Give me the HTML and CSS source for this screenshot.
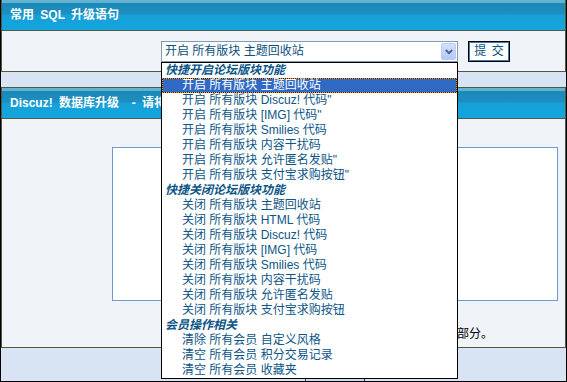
FILE: index.html
```html
<!DOCTYPE html>
<html lang="zh-CN">
<head>
<meta charset="UTF-8" />
<title>Discuz! 数据库升级</title>
<link rel="stylesheet" href="styles.css">
</head>
<body>
  <div class="frame">
    <div class="box box-first">
      <div class="box-head">常用 SQL 升级语句</div>
      <div class="box-body sql-row">
        <div class="combo">
          <div class="combo-field">
            <span class="combo-text">开启 所有版块 主题回收站</span>
            <span class="combo-arrow">
              <svg width="8" height="6" viewBox="0 0 8 6"><path d="M0.8 1 L4 4.2 L7.2 1" fill="none" stroke="#4d6185" stroke-width="2"/></svg>
            </span>
          </div>
          <ul class="combo-list">
            <li class="grp">快捷开启论坛版块功能</li>
            <li class="on">开启 所有版块 主题回收站</li>
            <li>开启 所有版块 Discuz! 代码"</li>
            <li>开启 所有版块 [IMG] 代码"</li>
            <li>开启 所有版块 Smilies 代码</li>
            <li>开启 所有版块 内容干扰码</li>
            <li>开启 所有版块 允许匿名发贴"</li>
            <li>开启 所有版块 支付宝求购按钮"</li>
            <li class="grp">快捷关闭论坛版块功能</li>
            <li>关闭 所有版块 主题回收站</li>
            <li>关闭 所有版块 HTML 代码</li>
            <li>关闭 所有版块 Discuz! 代码</li>
            <li>关闭 所有版块 [IMG] 代码</li>
            <li>关闭 所有版块 Smilies 代码</li>
            <li>关闭 所有版块 内容干扰码</li>
            <li>关闭 所有版块 允许匿名发贴</li>
            <li>关闭 所有版块 支付宝求购按钮</li>
            <li class="grp">会员操作相关</li>
            <li>清除 所有会员 自定义风格</li>
            <li>清空 所有会员 积分交易记录</li>
            <li>清空 所有会员 收藏夹</li>
          </ul>
        </div>
        <button class="btn">提&nbsp;交</button>
      </div>
    </div>

    <div class="box">
      <div class="box-head">Discuz! 数据库升级 &nbsp;- 请将升</div>
      <div class="box-body upgrade">
        <div class="sql-area"></div>
        <p class="note">请只执行需要的部分。</p>
      </div>
    </div>

    <div class="foot">
      <button class="btn btn-foot">提&nbsp;交</button>
    </div>
  </div>
</body>
</html>
```

FILE: styles.css
```css
body {
  margin: 0;
  background: #d8e4f4;
  font-family: "Liberation Sans", "Noto Sans CJK SC", sans-serif;
  font-size: 12px;
}
.frame {
  height: 382px;
  box-sizing: border-box;
  border: 1px solid #000;
  border-top: 0;
  background: #d8e4f4;
  overflow: hidden;
}
.box {
  border: 1px solid #4e5a44;
  background: #f0f4f8;
}
.box-first {
  border-top: 0;
}
.box + .box {
  margin-top: 15px;
}
.box-head {
  height: 30px;
  line-height: 31px;
  padding-left: 8px;
  color: #fff;
  font-weight: bold;
  white-space: nowrap;
  word-spacing: 3px;
  border-bottom: 1px solid #4e5a44;
  background: linear-gradient(to bottom, #64b2d2 0, #64b2d2 3px, #1a88b8 3px, #1d8fc0 14px, #17a0d7 15px, #13a5de 100%);
}

/* select row */
.sql-row {
  display: flex;
  align-items: flex-start;
  gap: 10px;
  padding: 10px 0 9px 159px;
}
.combo {
  position: relative;
}
.combo-field {
  display: flex;
  align-items: center;
  width: 297px;
  height: 21px;
  box-sizing: border-box;
  border: 1px solid #7f9db9;
  background: #fff;
  padding-left: 3px;
  color: #0b4f7d;
}
.combo-text {
  flex: 1;
  line-height: 19px;
  white-space: nowrap;
}
.combo-arrow {
  display: flex;
  align-items: center;
  justify-content: center;
  width: 15px;
  height: 17px;
  margin-right: 1px;
  border: 1px solid #b9cbf3;
  border-radius: 2px;
  box-sizing: border-box;
  background: linear-gradient(to bottom, #d3e0fd, #b6c9f6);
}
.combo-list {
  position: absolute;
  top: 21px;
  left: 0;
  z-index: 5;
  width: 297px;
  box-sizing: border-box;
  margin: 0;
  padding: 0;
  list-style: none;
  border: 1px solid #000;
  background: #fff;
}
.combo-list li {
  height: 15px;
  line-height: 15px;
  padding-left: 20px;
  color: #0c5587;
  white-space: nowrap;
}
.combo-list li.grp {
  padding-left: 3px;
  font-weight: bold;
  font-style: italic;
}
.combo-list li.on {
  box-sizing: border-box;
  line-height: 13px;
  padding-left: 19px;
  color: #fff;
  border: 1px dotted #f0a030;
  background: linear-gradient(#316ac5, #316ac5) padding-box, #3a2208 border-box;
}

.btn {
  width: 42px;
  height: 21px;
  padding: 0;
  border: 1px solid #000;
  background: #fff;
  box-shadow: inset 0 0 0 1px #3d7ab5;
  color: #0b4f7d;
  font-family: "Liberation Sans", "Noto Sans CJK SC", sans-serif;
  font-size: 12px;
  line-height: 17px;
  word-spacing: 2px;
}

/* upgrade box */
.upgrade {
  height: 228px;
  box-sizing: border-box;
  padding-top: 28px;
}
.sql-area {
  margin-left: 110px;
  width: 446px;
  height: 154px;
  box-sizing: border-box;
  border: 1px solid #6a9bd3;
  background: #fff;
}
.note {
  margin: 26px 0 0;
  padding-left: 371px;
  line-height: 14px;
  color: #000;
  white-space: nowrap;
}

.foot {
  padding: 30px 0 0 304px;
}
.btn-foot {
  width: 60px;
  height: 22px;
  border-color: #333;
  box-shadow: none;
  background: #c9daf2;
  color: #000;
  line-height: 14px;
  vertical-align: top;
}
```
